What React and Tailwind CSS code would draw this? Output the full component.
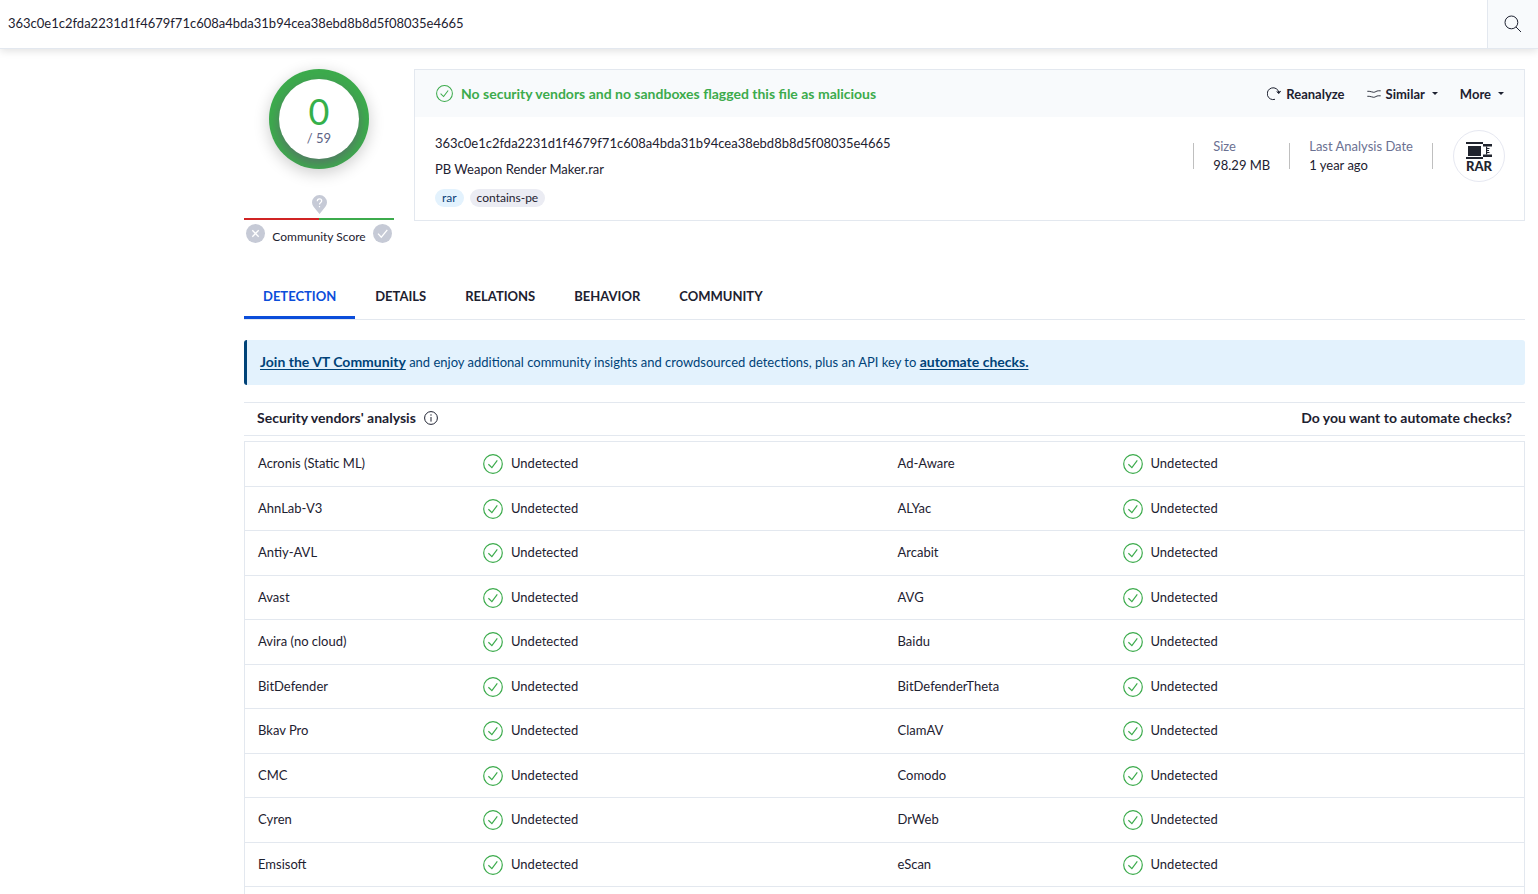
const FILE_HASH = "363c0e1c2fda2231d1f4679f71c608a4bda31b94cea38ebd8b8d5f08035e4665";

const TABS = ["DETECTION", "DETAILS", "RELATIONS", "BEHAVIOR", "COMMUNITY"];

// Two vendors per table row
const VENDORS = [
  ["Acronis (Static ML)", "Ad-Aware"],
  ["AhnLab-V3", "ALYac"],
  ["Antiy-AVL", "Arcabit"],
  ["Avast", "AVG"],
  ["Avira (no cloud)", "Baidu"],
  ["BitDefender", "BitDefenderTheta"],
  ["Bkav Pro", "ClamAV"],
  ["CMC", "Comodo"],
  ["Cyren", "DrWeb"],
  ["Emsisoft", "eScan"],
];

function CheckCircle({ className }) {
  return (
    <svg className={className} viewBox="0 0 20 20" fill="none" stroke="currentColor" strokeWidth="1.2">
      <circle cx="10" cy="10" r="9.3" />
      <path d="M5.4 10.2l3.5 3.4 5.4-7.2" />
    </svg>
  );
}

function SearchIcon() {
  return (
    <svg className="size-[18px]" viewBox="0 0 18 18" fill="none" stroke="currentColor" strokeWidth="1">
      <circle cx="7.4" cy="7.4" r="6.4" />
      <path d="M12 12l5 5" />
    </svg>
  );
}

function ReanalyzeIcon() {
  return (
    <svg className="size-[14px]" viewBox="0 0 14 14" fill="none" stroke="currentColor" strokeWidth="1">
      <path d="M8 12.3A5.9 5.9 0 1 1 11.9 5.4" />
      <path d="M9.6 4.5l2.3 2 1.8-2.6" />
      <path d="M10 4.7l1.9 1.9 1.4-2.3z" fill="currentColor" stroke="none" />
    </svg>
  );
}

function SimilarIcon() {
  return (
    <svg className="h-[10px] w-[14px]" viewBox="0 0 14 10" fill="none" stroke="currentColor" strokeWidth="0.9">
      <path d="M.3 2.3h1.9c1.8 0 2.8 1 4.5 1s2.7-1.5 4.6-1.5h2.4" />
      <path d="M.3 7.3h1.9c1.8 0 2.8 1 4.5 1s2.7-1.5 4.6-1.5h2.4" />
    </svg>
  );
}

function Caret() {
  return (
    <svg className="h-[3px] w-[6px]" viewBox="0 0 6 3" fill="currentColor">
      <path d="M0 0h6L3 3z" />
    </svg>
  );
}

function InfoIcon() {
  return (
    <svg className="size-[14px]" viewBox="0 0 14 14" fill="none" stroke="currentColor" strokeWidth="1">
      <circle cx="7" cy="7" r="6.4" />
      <path d="M7 6v4.6M7 3.3v1.4" />
    </svg>
  );
}

function PinIcon() {
  return (
    <svg className="h-[19px] w-[15px] text-[#c6cad6]" viewBox="0 0 15 19">
      <path d="M7.5 0A7.5 7.5 0 0 1 15 7.5c0 3.2-2.6 5.5-5 8.5L7.5 19 5 16C2.6 13 0 10.7 0 7.5A7.5 7.5 0 0 1 7.5 0z" fill="currentColor" />
      <path d="M5.3 6.2c0-1.5.9-2.3 2.2-2.3s2.2.8 2.2 2c0 1.700-2.2 1.700-2.2 3.700M7.5 11v1.300" fill="none" stroke="#fff" strokeWidth="1.2" />
    </svg>
  );
}

function VoteButton({ label, d }) {
  return (
    <button aria-label={label} className="size-[19px] rounded-full bg-[#c6cad6] text-white">
      <svg className="size-[19px]" viewBox="0 0 19 19" fill="none" stroke="currentColor" strokeWidth="1.3">
        <path d={d} />
      </svg>
    </button>
  );
}

function RarBadge() {
  return (
    <div className="flex size-[52px] flex-col items-center rounded-full border border-[#e6e8f1] pt-[11px] text-[#20242e]">
      <svg className="h-[17px] w-[26px]" viewBox="0 0 26 17" fill="currentColor">
        <path d="M0 0h17v2H0zM2 4h13v10H2zM0 15h17v2H0z" />
        <path d="M17 2h9v2.5h-9zM17 12.5h9V15h-9z" />
        <path d="M20 4.5h1.2v8H20zM21 6h2.5v1H21zM21 8h2v1h-2zM21 10h2.5v1H21z" />
      </svg>
      <span className="text-[13px] leading-[14px] font-black">RAR</span>
    </div>
  );
}

function Score() {
  return (
    <div className="flex w-[150px] shrink-0 flex-col items-center">
      <div className="flex size-[100px] items-center justify-center overflow-hidden rounded-full bg-[#3cab4c] shadow-[0_4px_16px_rgba(0,0,0,0.2)]">
        <div className="flex size-[80px] flex-col items-center justify-center rounded-full bg-white pt-[2px] shadow-[0_5px_12px_rgba(96,96,112,0.7)]">
          <div className="text-[36px] leading-[36px] text-[#35b04a]">0</div>
          <div className="text-[13px] leading-[18px] text-[#5d6385]">/ 59</div>
        </div>
      </div>
      <div className="mt-[26px]">
        <PinIcon />
      </div>
      <div className="mt-[4px] flex h-[2px] w-full">
        <div className="flex-1 bg-[#d02424]" />
        <div className="flex-1 bg-[#3cab4c]" />
      </div>
      <div className="mt-[4px] flex w-full justify-between px-[2px]">
        <VoteButton label="Vote down" d="M6.3 6.3l6.4 6.4M12.7 6.3l-6.4 6.4" />
        <span className="pt-[4px] text-[12px] leading-[18px]">Community Score</span>
        <VoteButton label="Vote up" d="M5 9.6l3.3 3.6 6-7.4" />
      </div>
    </div>
  );
}

function Stat({ label, value }) {
  return (
    <>
      <div className="h-[26px] w-px bg-[#bfbfbf]" />
      <div className="px-[19px] leading-[19px]">
        <div className="text-[#6b7192]">{label}</div>
        <div>{value}</div>
      </div>
    </>
  );
}

function Summary() {
  return (
    <div className="min-w-0 flex-1 border border-[#e3e8ef]">
      <div className="flex h-[47px] items-center justify-between bg-[#f8fafc] pr-[20px] pl-[21px]">
        <div className="flex items-center gap-2 text-[#3cab4c]">
          <CheckCircle className="size-[17px]" />
          <span className="text-[14px] leading-[20px] font-bold">
            No security vendors and no sandboxes flagged this file as malicious
          </span>
        </div>
        <div className="flex items-center gap-[22px] text-[13px] leading-[20px] font-bold">
          <button className="flex items-center gap-[5px]">
            <ReanalyzeIcon /> Reanalyze
          </button>
          <button className="flex items-center gap-[7px]">
            <span className="flex items-center gap-[5px]">
              <SimilarIcon /> Similar
            </span>
            <Caret />
          </button>
          <button className="flex items-center gap-[7px]">
            More <Caret />
          </button>
        </div>
      </div>
      <div className="flex items-start justify-between pt-[13px] pr-[19px] pb-[13px] pl-[20px]">
        <div>
          <div className="leading-[26px]">{FILE_HASH}</div>
          <div className="leading-[26px]">PB Weapon Render Maker.rar</div>
          <div className="mt-[7px] flex gap-[6px] text-[12px] leading-[18px]">
            <span className="rounded-full bg-[#e3f2fd] px-[7px] text-[#0b4178]">rar</span>
            <span className="rounded-full bg-[#ebecf3] px-[7px]">contains-pe</span>
          </div>
        </div>
        <div className="flex items-center">
          <Stat label="Size" value="98.29 MB" />
          <Stat label="Last Analysis Date" value="1 year ago" />
          <div className="mr-[20px] h-[26px] w-px bg-[#bfbfbf]" />
          <RarBadge />
        </div>
      </div>
    </div>
  );
}

function Result() {
  return (
    <span className="flex items-center gap-2">
      <CheckCircle className="size-[20px] text-[#3cab4c]" />
      Undetected
    </span>
  );
}

export default function App() {
  return (
    <div className="flex h-screen flex-col overflow-hidden bg-white font-[Lato,sans-serif] text-[13px] text-[#1d2130]">
      <header className="flex h-[49px] shrink-0 border-b border-[#e3e8ef] shadow-[0_2px_8px_rgba(0,0,0,0.12)]">
        <input
          aria-label="Search"
          defaultValue={FILE_HASH}
          className="min-w-0 flex-1 px-2 outline-none"
        />
        <button aria-label="Submit search" className="flex w-[51px] items-center justify-center border-l border-[#e3e8ef] bg-[#f8fafc]">
          <SearchIcon />
        </button>
      </header>

      <main className="flex min-h-0 flex-1 flex-col pt-[20px] pr-[13px] pl-[244px]">
        <section className="flex items-start gap-[20px]">
          <Score />
          <Summary />
        </section>

        <nav className="mt-[29px] flex gap-px border-b border-[#e3e8ef] leading-[20px] font-bold">
          {TABS.map((tab, i) => (
            <a
              key={tab}
              href="#"
              className={`border-b-3 px-[19px] pt-[11px] pb-[10px] ${i === 0 ? "border-[#0b4dda] text-[#0b4dda]" : "border-transparent"}`}
            >
              {tab}
            </a>
          ))}
        </nav>

        <div className="mt-[20px] rounded-[3px] border-l-3 border-[#004378] bg-[#e3f2fd] px-[13px] pt-[12px] pb-[13px] leading-[20px] text-[#004378]">
          <a href="#" className="text-[14px] font-bold underline underline-offset-2">Join the VT Community</a>{" "}
          and enjoy additional community insights and crowdsourced detections, plus an API key to{" "}
          <a href="#" className="text-[14px] font-bold underline underline-offset-2">automate checks.</a>
        </div>

        <div className="mt-[17px] flex items-center justify-between border-y border-[#e3e8ef] px-[13px] pt-[5px] pb-[7px] text-[14px] leading-[20px] font-bold">
          <span className="flex items-center gap-2">
            Security vendors' analysis <InfoIcon />
          </span>
          <a href="#">Do you want to automate checks?</a>
        </div>

        <div className="mt-[5px] min-h-0 flex-1 border-x border-t border-[#e3e8ef]">
          <table className="w-full table-fixed border-separate border-spacing-0">
            <colgroup>
              <col className="w-[225px]" />
              <col />
              <col className="w-[225px]" />
              <col />
            </colgroup>
            <tbody>
              {VENDORS.map(([left, right]) => (
                <tr key={left} className="odd:h-[45px] even:h-[44px] [&>td]:border-b [&>td]:border-[#e3e8ef] [&>td]:px-[13px]">
                  <td>{left}</td>
                  <td><Result /></td>
                  <td>{right}</td>
                  <td><Result /></td>
                </tr>
              ))}
            </tbody>
          </table>
        </div>
      </main>
    </div>
  );
}
